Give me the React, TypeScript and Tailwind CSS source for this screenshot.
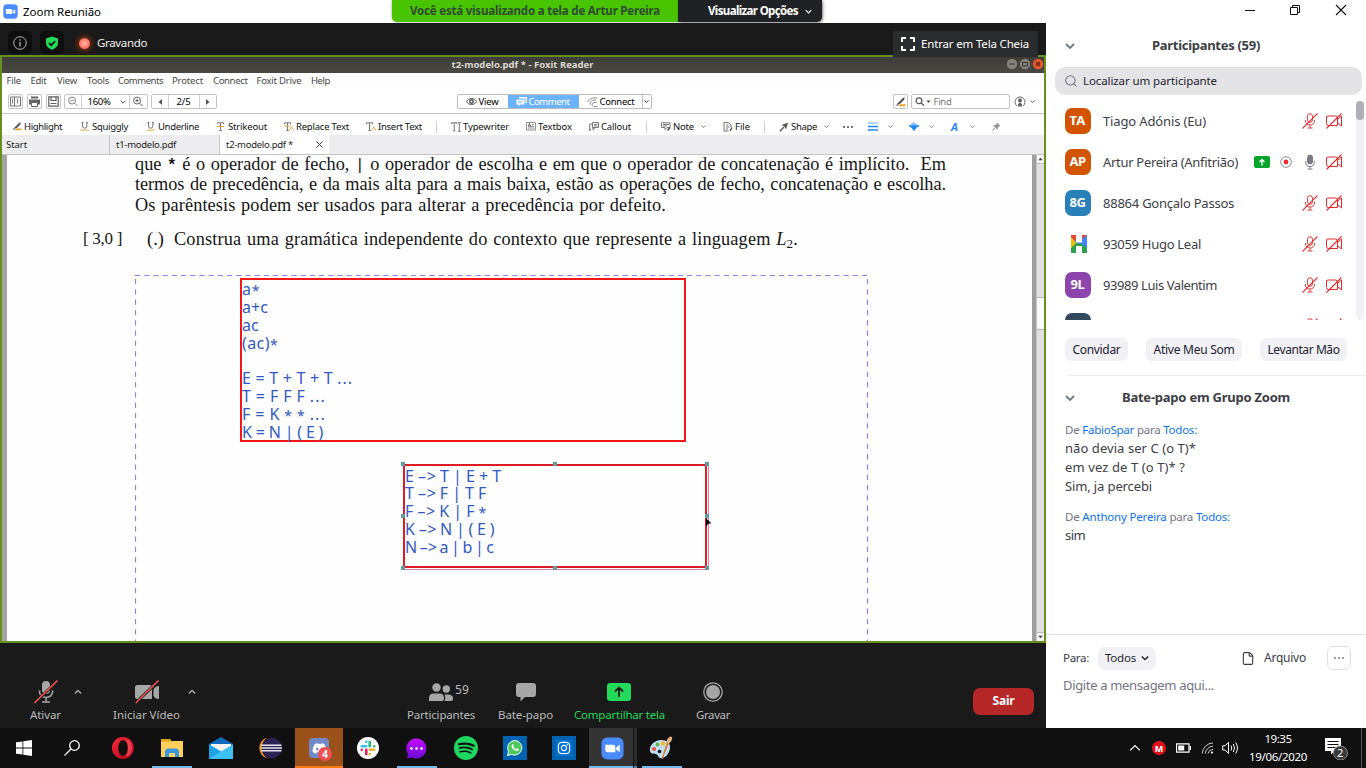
import React, { useLayoutEffect, useRef } from "react";
import { SiSpotify } from "react-icons/si";
import { FaInstagram, FaDiscord } from "react-icons/fa";
import { Search, File } from "lucide-react";

/* One line of text whose letter spacing is worked out so that it fills `w` pixels. */
function Fit({ w, className = "", children }: { w: number; className?: string; children: React.ReactNode }) {
  const ref = useRef<HTMLSpanElement>(null);
  useLayoutEffect(() => {
    const el = ref.current;
    if (!el) return;
    el.style.letterSpacing = "0px";
    const natural = el.getBoundingClientRect().width;
    const count = (el.textContent || "").length || 1;
    el.style.letterSpacing = `${(w - natural) / count}px`;
  }, [w]);
  return (
    <span ref={ref} className={"inline-block shrink-0 whitespace-pre " + className}>
      {children}
    </span>
  );
}

function Chevron({ className = "", up = false, sw = 1.5 }: { className?: string; up?: boolean; sw?: number }) {
  return (
    <svg viewBox="0 0 10 10" className={"shrink-0 " + className} fill="none" stroke="currentColor" strokeWidth={sw}>
      <path d={up ? "M1 7 L5 3 L9 7" : "M1 3 L5 7 L9 3"} />
    </svg>
  );
}

function ZoomLogo({ className = "" }: { className?: string }) {
  return (
    <svg viewBox="0 0 24 24" className={"shrink-0 " + className}>
      <rect x="0.5" y="0.5" width="23" height="23" rx="6" fill="#4a8cff" />
      <path d="M4.5 8h8a2.5 2.5 0 0 1 2.500 2.500V16H7a2.500 2.500 0 0 1-2.500-2.500z" fill="#fff" />
      <path d="M15.800 11l3.700-2.800v7.600L15.800 13z" fill="#fff" />
    </svg>
  );
}

function TitleBar() {
  return (
    <div className="flex h-[23px] shrink-0 items-start bg-white text-black">
      <div className="flex h-[23px] w-[392px] items-center pl-[3px]">
        <ZoomLogo className="h-[15px] w-[15px]" />
        <Fit w={78} className="ml-[5px] text-[11.500px]">Zoom Reunião</Fit>
      </div>
      <div className="flex h-[22px] w-[286px] items-center justify-center rounded-bl-[5px] bg-[#48c400] shadow-[0_0_3px_rgba(0,0,0,0.4)]">
        <Fit w={250} className="text-[11.500px] font-bold text-[#2f4a33]">Você está visualizando a tela de Artur Pereira</Fit>
      </div>
      <div className="flex h-[22px] w-[144px] items-center rounded-br-[5px] bg-[#202124] pl-[30px] text-white shadow-[1px_1px_3px_rgba(0,0,0,0.5)]">
        <Fit w={90} className="text-[11.500px] font-bold">Visualizar Opções</Fit>
        <Chevron className="ml-[7px] h-[7px] w-[7px]" />
      </div>
      <svg className="ml-[422px] h-[22px] w-[104px]" viewBox="0 0 104 22" fill="none" stroke="#111" strokeWidth="1">
        <path d="M1 10.500H11" />
        <path d="M46.500 7.500h7v7h-7zM48.500 7.500V5.500h7v7h-2" />
        <path d="M92 5l10 10M102 5l-10 10" strokeWidth="1.100" />
      </svg>
    </div>
  );
}

function MeetingBar() {
  return (
    <div className="relative z-10 flex h-[32px] shrink-0 bg-[#1a1a1a] pl-[8px] pt-[8px] text-white">
      <div className="flex h-[23px] w-[24px] items-center justify-center rounded-[5px] bg-[#0e0e0e]">
        <svg viewBox="0 0 14 14" className="h-[14px] w-[14px]" fill="none" stroke="#b5b5b5">
          <circle cx="7" cy="7" r="6.300" />
          <path d="M7 6v4.500M7 3.300v1.400" strokeWidth="1.300" />
        </svg>
      </div>
      <div className="ml-[8px] flex h-[23px] w-[24px] items-center justify-center rounded-[5px] bg-[#0e0e0e]">
        <svg viewBox="0 0 14 14" className="h-[14px] w-[14px]">
          <path d="M7 0.500l6 2v4.500c0 3.200-2.600 5.400-6 6.800C3.600 12.400 1 10.200 1 7V2.500z" fill="#23d959" />
          <path d="M4 7l2.200 2.200L10.200 5" stroke="#111" strokeWidth="1.700" fill="none" />
        </svg>
      </div>
      <div className="ml-[10px] flex h-[24px] w-[20px] items-center justify-center">
        <div className="h-[11px] w-[11px] rounded-full bg-radial from-[#ffb3a6] to-[#f2402f] shadow-[0_0_5px_2px_rgba(190,60,10,0.55)]" />
      </div>
      <div className="ml-[3px] flex h-[24px] items-center text-[#eee]">
        <Fit w={50} className="text-[11.500px]">Gravando</Fit>
      </div>
      <div className="ml-auto mr-[8px] flex h-[26px] w-[145px] shrink-0 items-center bg-[#2a2b2d] pl-[8px]">
        <svg viewBox="0 0 14 14" className="h-[14px] w-[14px] shrink-0" fill="none" stroke="#fff" strokeWidth="2">
          <path d="M1 5V1h4M9 1h4v4M13 9v4H9M5 13H1V9" />
        </svg>
        <Fit w={108} className="ml-[6px] text-[11.500px]">Entrar em Tela Cheia</Fit>
      </div>
    </div>
  );
}

const menu: [string, number, string][] = [
  ["File", 14.500, "w-[24px]"],
  ["Edit", 16, "w-[26.500px]"],
  ["View", 20, "w-[30px]"],
  ["Tools", 22, "w-[31px]"],
  ["Comments", 45, "w-[54px]"],
  ["Protect", 31, "w-[41px]"],
  ["Connect", 34.500, "w-[43.500px]"],
  ["Foxit Drive", 45, "w-[54.500px]"],
  ["Help", 19, "w-[30px]"],
];

const boxed = "flex h-[15px] w-[15px] items-center justify-center rounded-[2px] border border-[#c4c4c4] bg-white";

function FoxitToolbar() {
  return (
    <div className="flex h-[24px] shrink-0 items-center border-b border-[#c8c8c8] bg-white pl-[6px] text-[#333]">
      <div className={boxed}>
        <svg viewBox="0 0 11 11" className="h-[11px] w-[11px]" fill="none" stroke="#666">
          <path d="M0.500 1h10v9h-10zM4.500 1v9" strokeWidth=".9" /><path d="M2.500 2.500v5M7.500 2.500v5" stroke="#888" strokeWidth="1.200" />
        </svg>
      </div>
      <div className={boxed + " ml-[4px]"}>
        <svg viewBox="0 0 11 11" className="h-[11px] w-[11px]">
          <path d="M2 0.500h7v2H2zM0 3.500h11v5H9v-2H2v2H0z" fill="#666" />
          <path d="M2.500 6.500h6v4h-6z" fill="none" stroke="#666" />
        </svg>
      </div>
      <div className={boxed + " ml-[3.500px]"}>
        <svg viewBox="0 0 11 11" className="h-[11px] w-[11px]">
          <path d="M0.800 0.800h9.400v9.400H0.800zM3 1v3.500h5V1M2.500 7.500h6" fill="none" stroke="#5c5c5c" strokeWidth="1.200" />
        </svg>
      </div>
      <div className="ml-[3px] flex h-[15px] w-[84px] items-center rounded-[2px] border border-[#c4c4c4]">
        <svg viewBox="0 0 12 12" className="mx-[2px] h-[11px] w-[12px] shrink-0" fill="none" stroke="#777">
          <circle cx="5" cy="5" r="3.800" /><path d="M7.800 7.800L11 11M3.200 5h3.600" />
        </svg>
        <div className="flex h-[13px] w-[49px] shrink-0 items-center border-x border-[#d0d0d0] pl-[6px] pt-px">
          <Fit w={23} className="text-[9.500px] text-black">160%</Fit>
          <Chevron className="ml-[9px] h-[6px] w-[6px]" />
        </div>
        <svg viewBox="0 0 12 12" className="ml-[2px] h-[11px] w-[12px] shrink-0" fill="none" stroke="#555">
          <circle cx="5" cy="5" r="3.800" /><path d="M7.800 7.800L11 11M3.200 5h3.600M5 3.200v3.600" />
        </svg>
      </div>
      <div className="ml-[3px] flex h-[15px] w-[66px] items-center rounded-[2px] border border-[#c4c4c4]">
        <svg viewBox="0 0 16 12" className="h-[12px] w-[16px] shrink-0"><path d="M10 3v6L6.500 6z" fill="#555" /></svg>
        <div className="flex h-[13px] w-[32px] shrink-0 items-center justify-center border-x border-[#d0d0d0] pt-px">
          <Fit w={14} className="text-[9.500px] text-black">2/5</Fit>
        </div>
        <svg viewBox="0 0 16 12" className="h-[12px] w-[16px] shrink-0"><path d="M6 3v6l3.500-3z" fill="#555" /></svg>
      </div>
      <div className="ml-[240px] flex h-[15px] w-[195px] shrink-0 items-center overflow-hidden rounded-[2px] border border-[#bcbcbc] text-[9.500px] text-black">
        <div className="flex w-[50px] shrink-0 items-center pl-[8px]">
          <svg viewBox="0 0 11 9" className="h-[9px] w-[11px]" fill="none" stroke="#555">
            <path d="M0.500 4.500C2.500 0.500 8.500 0.500 10.500 4.500C8.500 8.500 2.500 8.500 0.500 4.500z" /><circle cx="5.500" cy="4.500" r="1.700" strokeWidth="1.500" />
          </svg>
          <Fit w={20} className="ml-[2px] pt-px">View</Fit>
        </div>
        <div className="flex h-[13px] w-[71px] shrink-0 items-center bg-[#6cb3fd] pl-[8px] text-white">
          <svg viewBox="0 0 11 10" className="h-[10px] w-[11px]">
            <path d="M3 0h8v6H9.500V1.500H3z" fill="#fff" /><path d="M0.500 2.500h8v5H4L2.500 9.500V7.500h-2z" fill="#fff" /><path d="M2 4.200h5M2 5.800h4" stroke="#6cb3fd" strokeWidth=".7" />
          </svg>
          <Fit w={41} className="ml-[2px] pt-px">Comment</Fit>
        </div>
        <div className="flex w-[63px] shrink-0 items-center pl-[8px]">
          <svg viewBox="0 0 11 10" className="h-[10px] w-[11px]" fill="none" stroke="#888">
            <path d="M1 5C2.500 1.500 5 0.500 10 1M3 7.500C3 4.500 5 3 9 3M5.500 9.500C4.500 6.500 6 5 9.500 5.500M7 9.500h3" />
          </svg>
          <Fit w={35} className="ml-[2px] pt-px">Connect</Fit>
        </div>
        <div className="flex h-[13px] w-[9px] shrink-0 items-center justify-center border-l border-[#c4c4c4]">
          <Chevron className="h-[5px] w-[5px]" />
        </div>
      </div>
      <div className={boxed + " ml-[241px] shrink-0"}>
        <PenIcon className="h-[10px] w-[11px]" />
      </div>
      <div className="ml-[3px] flex h-[15px] w-[99px] shrink-0 items-center rounded-[2px] border border-[#c4c4c4] pl-[3px]">
        <svg viewBox="0 0 16 9" className="h-[9px] w-[16px]" fill="none" stroke="#555" strokeWidth="1.300">
          <circle cx="4" cy="3.800" r="2.900" /><path d="M6.200 6L9 8.500" /><path d="M11.500 3.500h4l-2 2.500z" fill="#444" stroke="none" />
        </svg>
        <Fit w={18} className="ml-[3px] pt-px text-[9.500px] text-[#777]">Find</Fit>
      </div>
      <svg viewBox="0 0 12 12" className="ml-[4px] h-[12px] w-[12px]" fill="none" stroke="#666">
        <path d="M3 10A5 5 0 1 1 9 10" /><circle cx="6" cy="4.500" r="1.600" fill="#555" /><path d="M4.500 10.500V8L6 7l1.500 1v2.500" fill="#666" />
      </svg>
      <Chevron className="ml-[4px] h-[5px] w-[5px]" />
    </div>
  );
}

function PenIcon({ className = "" }: { className?: string }) {
  return (
    <svg viewBox="0 0 11 10" className={"shrink-0 " + className}>
      <path d="M2 7L8 .8l1.800-.3L9 3 5 7z" fill="#555" />
      <path d="M.5 9l2-2.500L4.500 8z" fill="#777" />
      <path d="M5 7.300h5.500v2H3.500z" fill="#f5a02c" />
    </svg>
  );
}

const g = "#777";
const o = "#e5a53c";
function Glyph({ kind }: { kind: string }) {
  const shapes: Record<string, React.ReactNode> = {
    squiggly: <><path d="M2.500 0.500v3.500a2.200 2.200 0 0 0 4.400 0V0.500M1.500 .6h2M6 .6h2" stroke={g} /><path d="M0 8.500l1.500-1 1.500 1 1.500-1 1.500 1 1.500-1 1.500 1" stroke={o} /></>,
    underline: <><path d="M2.500 0.500v3.500a2.200 2.200 0 0 0 4.400 0V0.500M1.500 .6h2M6 .6h2" stroke={g} /><path d="M1 8.200h7.500" stroke={o} /></>,
    strikeout: <><path d="M1.500 2V0.800h6V2M4.500 .8v7.500M3.200 8.500h2.600" stroke={g} /><path d="M1 4.500h7" stroke={o} /></>,
    replace: <><path d="M.5 2V0.800h6V2M3.500 .8v7.500M2.300 8.500h2.500" stroke={g} /><path d="M0 4h6.500M5 8.500L7.500 5 10 8.500" stroke={o} /></>,
    insert: <><path d="M.5 2V0.800h6V2M3.500 .8v7.500M2.300 8.500h2.500" stroke={g} /><path d="M5.500 8.500L7.800 5 10 8.500" stroke={o} /></>,
    typewriter: <><path d="M.5 2V0.800h5.500V2M3.200 .8v8M2 8.800h2.500M8.300 0v9.500M7 .4h2.700M7 9.300h2.700" stroke={g} /></>,
    textbox: <><path d="M.5 .5h9v7.500h-9zM2 6h6M2 4.500h6M6 2.500h2" stroke={g} strokeWidth=".8" /><path d="M2.500 4l1-2.500 1 2.500" stroke="#555" /></>,
    callout: <><path d="M3.500 .5h6v5h-6zM5 2.500h3.500M5 4h3M3.500 2H.8v6.500M0 7.200l.9 1.600.9-1.600M4 5.500v2.500l2-2.300" stroke={g} /></>,
    note: <><path d="M.5 .8h8.500v4.700H6L4 7.800V5.500H.5zM2 2.500h6M2 4h4" stroke={g} /><path d="M6.500 8.500l2.500-3" stroke="#555" strokeWidth="1.500" /></>,
    file: <><path d="M5.500 9H1V.5h4.500L8 3v2.500M3 3h2.500M3 5h3.500M3 7h2" stroke={g} /><path d="M7 9l2-3.500" stroke="#555" strokeWidth="1.500" /></>,
    shape: <><path d="M.8 9.200L5 5" stroke="#555" strokeWidth="1.300" /><path d="M2.500 3L9 .5 7 7.500 5.500 4.500z" fill="#555" /></>,
  };
  return <svg viewBox="0 0 10 10" className="h-[10px] w-[10px] shrink-0" fill="none">{shapes[kind]}</svg>;
}

function Tool({ kind, label, w, cell, chevron = false }: { kind: string; label: string; w: number; cell: string; chevron?: boolean }) {
  return (
    <div className={"flex shrink-0 items-center " + cell}>
      {kind === "highlight" ? <PenIcon className="h-[9px] w-[10px]" /> : <Glyph kind={kind} />}
      <Fit w={w} className="ml-[2px] pt-px">{label}</Fit>
      {chevron && <Chevron className="ml-[7px] h-[5px] w-[5px] text-[#666]" />}
    </div>
  );
}

const Sep = () => <div className="mr-[14px] h-[12px] w-px shrink-0 bg-[#cfcfcf]" />;

function CommentTools() {
  return (
    <div className="flex h-[21px] shrink-0 items-center bg-white pl-[10px] pt-[4px] text-[9.500px] text-[#111]">
      <Tool kind="highlight" label="Highlight" w={38} cell="w-[68px]" />
      <Tool kind="squiggly" label="Squiggly" w={36} cell="w-[66px]" />
      <Tool kind="underline" label="Underline" w={41} cell="w-[70px]" />
      <Tool kind="strikeout" label="Strikeout" w={39} cell="w-[68px]" />
      <Tool kind="replace" label="Replace Text" w={53} cell="w-[82px]" />
      <Tool kind="insert" label="Insert Text" w={44} cell="w-[70px]" />
      <Sep />
      <Tool kind="typewriter" label="Typewriter" w={46} cell="w-[75px]" />
      <Tool kind="textbox" label="Textbox" w={34} cell="w-[63px]" />
      <Tool kind="callout" label="Callout" w={30} cell="w-[57px]" />
      <Sep />
      <Tool kind="note" label="Note" w={21} cell="w-[62px]" chevron />
      <Tool kind="file" label="File" w={15} cell="w-[41px]" />
      <Sep />
      <Tool kind="shape" label="Shape" w={26} cell="w-[64px]" chevron />
      <div className="flex w-[25px] shrink-0 gap-[2px]">
        <i className="size-[2px] bg-[#777]" /><i className="size-[2px] bg-[#777]" /><i className="size-[2px] bg-[#777]" />
      </div>
      <div className="flex w-[41px] shrink-0 items-center text-[#666]">
        <svg viewBox="0 0 10 9" className="h-[9px] w-[10px]"><path d="M0 1h10" stroke="#9acbff" strokeWidth="1.500" /><path d="M0 4.500h10M0 8h10" stroke="#1e88ff" strokeWidth="1.600" /></svg>
        <Chevron className="ml-[10px] h-[5px] w-[5px]" />
      </div>
      <div className="flex w-[42px] shrink-0 items-center text-[#666]">
        <svg viewBox="0 0 10 9" className="h-[9px] w-[10px]"><path d="M4.500 0L0.500 3.500h9z" fill="#8cc4ff" /><path d="M0 3.300h10v1.500H8.500L5 9 1.500 4.800H0z" fill="#1e88ff" /></svg>
        <Chevron className="ml-[10px] h-[5px] w-[5px]" />
      </div>
      <div className="flex w-[41px] shrink-0 items-center text-[#666]">
        <span className="w-[10px] text-[11px] leading-[10px] font-bold text-[#1e88ff] italic">A</span>
        <Chevron className="ml-[9px] h-[5px] w-[5px]" />
      </div>
      <svg viewBox="0 0 9 9" className="h-[9px] w-[9px]"><path d="M5 .5L8.500 4l-1 .3L6 5.700 5.500 8 1 3.500l2.300-.5L4.700 1.500z" fill="#999" /><path d="M.5 8.500l3-3" stroke="#999" /></svg>
    </div>
  );
}

function Tabs() {
  return (
    <div className="flex h-[20px] shrink-0 border-b border-[#c4c4c6] bg-[#ededef] text-[9.500px] text-[#222]">
      <div className="flex w-[108px] items-center border-r border-[#c4c4c6] pl-[4px] pt-[2px]"><Fit w={21}>Start</Fit></div>
      <div className="flex w-[110px] items-center border-r border-[#c4c4c6] pl-[6px] pt-[2px]"><Fit w={60}>t1-modelo.pdf</Fit></div>
      <div className="flex w-[109px] items-center bg-white pl-[6px] pt-[2px]">
        <Fit w={67}>t2-modelo.pdf *</Fit>
        <svg viewBox="0 0 8 8" className="mb-[2px] ml-[23px] h-[7px] w-[7px]" stroke="#333" strokeWidth="1.100"><path d="M.5 .5l7 7M7.500 .5l-7 7" /></svg>
      </div>
    </div>
  );
}

const Star = () => <span className="relative top-[1px] text-[14px]">*</span>;

const boxA: [React.ReactNode, number][] = [
  [<>a<Star /></>, 18],
  ["a+c", 26],
  ["ac", 16.500],
  [<>(ac)<Star /></>, 36],
  [" ", 5],
  ["E = T + T + T ...", 111],
  ["T = F F F ...", 84],
  [<>F = K <Star /> <Star /> ...</>, 84],
  ["K = N | ( E )", 82],
];
const boxB: [React.ReactNode, number][] = [
  ["E –> T | E + T", 97],
  ["T –> F | T F", 82],
  [<>F –&gt; K | F <Star /></>, 82],
  ["K –> N | ( E )", 90],
  ["N –> a | b | c", 89],
];

const notes = "font-['Noto_Sans',sans-serif] text-[16px] leading-[17.900px] text-[#3159c4] [word-spacing:-1.500px]";

function DocumentPage() {
  return (
    <div className="flex min-h-0 flex-1">
      <div className="w-[5px] shrink-0 bg-[#a3a3a3]" />
      <div className="relative flex w-[1025px] shrink-0 flex-col overflow-hidden bg-[#fefefe] font-['Liberation_Serif',serif] text-[18.300px] leading-[20.500px] text-[#151515]">
        <div className="ml-[128px] mt-[-1.500px] flex flex-col items-start">
          <Fit w={811} className="h-[20.500px] [word-spacing:1px]">que <b className="font-['Liberation_Mono',monospace] text-[16px] leading-[16px]">*</b> é o operador de fecho, <span className="font-['Liberation_Mono',monospace] text-[16px] leading-[16px]">|</span> o operador de escolha e em que o operador de concatenação é implícito.  Em</Fit>
          <Fit w={811} className="h-[20.500px] [word-spacing:1px]">termos de precedência, e da mais alta para a mais baixa, estão as operações de fecho, concatenação e escolha.</Fit>
          <Fit w={531} className="h-[20.500px] [word-spacing:1px]">Os parêntesis podem ser usados para alterar a precedência por defeito.</Fit>
        </div>
        <div className="ml-[76px] mt-[14px] flex">
          <Fit w={39} className="text-[17px]">[ 3,0 ]</Fit>
          <Fit w={17} className="ml-[25px]">(.)</Fit>
          <Fit w={624} className="ml-[10px] h-[20.500px] [word-spacing:1px]">Construa uma gramática independente do contexto que represente a linguagem <i>L</i><span className="relative top-[3px] text-[13px] leading-[13px]">2</span>.</Fit>
        </div>
        <svg viewBox="0 0 734 367" className="absolute left-[128px] top-[120px] h-[367px] w-[734px]" fill="none" stroke="#8b82f0" strokeWidth="1.200">
          <path d="M0 .5H733" strokeDasharray="5.200 4" />
          <path d="M.5 4V367M732.500 4V367" strokeDasharray="5.300 5" />
        </svg>

        <div className={"absolute left-[233px] top-[123px] flex h-[164px] w-[446px] flex-col border-2 border-[#f01818] pt-px " + notes}>
          {boxA.map(([t, w], i) => (
            <div key={i} className="h-[17.900px] shrink-0"><Fit w={w}>{t}</Fit></div>
          ))}
        </div>
        <div className={"absolute left-[396px] top-[309px] flex h-[104px] w-[304px] flex-col border-2 border-[#dc1c24] pt-[1.500px] shadow-[1px_1px_0_0_#fff,2px_2px_0_0_#d77fae] " + notes}>
          {boxB.map(([t, w], i) => (
            <div key={i} className="h-[17.900px] shrink-0"><Fit w={w}>{t}</Fit></div>
          ))}
        </div>
        <div className="absolute left-[394px] top-[307px] grid h-[108px] w-[308px] grid-cols-3 content-between">
          <i className="size-[4px] bg-[#5f9ea0]" /><i className="size-[4px] justify-self-center bg-[#5f9ea0]" /><i className="size-[4px] justify-self-end bg-[#5f9ea0]" />
          <i className="size-[4px] bg-[#5f9ea0]" /><i /><i className="size-[4px] justify-self-end bg-[#5f9ea0]" />
          <i className="size-[4px] bg-[#5f9ea0]" /><i className="size-[4px] justify-self-center bg-[#5f9ea0]" /><i className="size-[4px] justify-self-end bg-[#5f9ea0]" />
        </div>
        <svg viewBox="0 0 7 10" className="absolute left-[698px] top-[363px] h-[10px] w-[7px]"><path d="M1 0l5.500 5.500H3.500L1 8.500z" fill="#000" /></svg>
      </div>
      <div className="w-[4px] shrink-0 bg-[#9e9e9e]" />
      <div className="flex w-[8px] shrink-0 flex-col border-l border-[#c5c5c5] bg-[#e2e0de]">
        <svg viewBox="0 0 7 9" className="h-[9px] w-[7px] border-b border-[#bbb] bg-[#f4f4f4]"><path d="M1 6l2.500-3L6 6z" fill="#444" /></svg>
        <div className="mt-[133px] h-[33px] border-y border-[#b5b5b5] bg-[#fafafa]" />
        <svg viewBox="0 0 7 9" className="mt-auto h-[9px] w-[7px] border-t border-[#bbb] bg-[#f4f4f4]"><path d="M1 3l2.500 3L6 3z" fill="#444" /></svg>
      </div>
    </div>
  );
}

function SharedScreen() {
  return (
    <div className="flex h-[588px] shrink-0 flex-col border-2 border-[#678f1d] bg-white">
      <div className="flex h-[16px] shrink-0 items-center bg-linear-to-b from-[#3f3d39] to-[#4a4843]">
        <Fit w={142} className="ml-[449.500px] text-[9.500px] font-bold text-[#dbd8d0]">t2-modelo.pdf * - Foxit Reader</Fit>
        <svg viewBox="0 0 38 12" className="mb-[2px] ml-auto h-[12px] w-[38px]">
          <circle cx="6" cy="6" r="5.200" fill="#86827b" /><path d="M3.500 6h5" stroke="#333" />
          <circle cx="19" cy="6" r="5.200" fill="#86827b" /><path d="M16.500 4.500h5v3.500h-5z" stroke="#333" fill="none" />
          <circle cx="32" cy="6" r="5.200" fill="#e65a2b" /><path d="M30 4l4 4M34 4l-4 4" stroke="#5a2010" strokeWidth="1.200" />
        </svg>
      </div>
      <div className="flex h-[17px] shrink-0 items-center bg-[#fdfdfd] pl-[4.500px] text-[9.500px] text-[#4a4a4a]">
        {menu.map(([t, w, cell]) => (
          <div key={t} className={"shrink-0 " + cell}><Fit w={w}>{t}</Fit></div>
        ))}
      </div>
      <FoxitToolbar />
      <CommentTools />
      <Tabs />
      <DocumentPage />
    </div>
  );
}

function BarItem({ label, w, className = "", green = false, children }: { label: string; w: number; className?: string; green?: boolean; children: React.ReactNode }) {
  return (
    <div className={"flex shrink-0 flex-col items-center " + className}>
      <div className="relative flex h-[24px] w-[30px] items-center justify-center">{children}</div>
      <div className={"flex h-[22px] items-center " + (green ? "text-[#23d959]" : "text-[#bababa]")}>
        <Fit w={w} className="text-[11.500px]">{label}</Fit>
      </div>
    </div>
  );
}

function MeetingControls() {
  return (
    <div className="flex h-[85px] shrink-0 bg-[#1a1a1a] pl-[30px] pt-[37px]">
      <BarItem label="Ativar" w={31} className="w-[31px]">
        <svg viewBox="0 0 24 24" className="h-[24px] w-[24px]" fill="none">
          <rect x="8" y="1" width="8" height="13" rx="4" fill="#a6a6a6" />
          <path d="M5.500 10.500v1.500a6.500 5.500 0 0 0 13 0v-1.500M12 17.500v4.500M8 22h8" stroke="#a6a6a6" strokeWidth="1.600" />
          <path d="M.5 23L23.500 1" stroke="#1a1a1a" strokeWidth="3" /><path d="M.5 23L23.500 .5" stroke="#e85050" strokeWidth="1.600" />
        </svg>
      </BarItem>
      <Chevron up className="ml-[13px] mt-[8px] h-[8px] w-[8px] text-[#aaa]" sw={1.8} />
      <BarItem label="Iniciar Vídeo" w={67} className="ml-[31px] w-[67px]">
        <svg viewBox="0 0 24 24" className="h-[24px] w-[24px]">
          <path d="M2.500 5H15a2 2 0 0 1 2 2v12H2.500A2.500 2.500 0 0 1 0 16.500v-9A2.500 2.500 0 0 1 2.500 5zM18.500 9.500Q20 6 24 6v13q-4 0-5.500-3z" fill="#a6a6a6" />
          <path d="M.5 23L23.500 1" stroke="#1a1a1a" strokeWidth="3" /><path d="M.8 23L23.500 .5" stroke="#e85050" strokeWidth="1.600" />
        </svg>
      </BarItem>
      <Chevron up className="ml-[8px] mt-[8px] h-[8px] w-[8px] text-[#aaa]" sw={1.8} />
      <BarItem label="Participantes" w={68} className="ml-[211px] w-[68px]">
        <svg viewBox="0 0 24 20" className="h-[20px] w-[24px]" fill="#a6a6a6">
          <circle cx="7.500" cy="5.500" r="4.200" /><path d="M0 19v-3.500Q.5 11.500 4.500 11.500h6Q14.500 11.500 15 15.500V17q0 2-2 2z" />
          <circle cx="17.300" cy="7" r="3.700" /><path d="M15.500 12.500h4.500q4 .5 4 4v.5q0 2-2 2h-6.500q1-1.500.7-3.500 0-1.500-.7-3z" />
        </svg>
        <span className="absolute left-[29px] top-[2px] flex h-[16px] items-center"><Fit w={14} className="text-[12px] leading-[16px] text-[#bababa]">59</Fit></span>
      </BarItem>
      <BarItem label="Bate-papo" w={55} className="ml-[23px] w-[55px]">
        <svg viewBox="0 0 20 18" className="h-[18px] w-[20px]"><path d="M3 0h14a3 3 0 0 1 3 3v8a3 3 0 0 1-3 3H9l-4.500 4.500V14H3a3 3 0 0 1-3-3V3a3 3 0 0 1 3-3z" fill="#a6a6a6" /></svg>
      </BarItem>
      <BarItem label="Compartilhar tela" w={91} green className="ml-[21px] w-[91px]">
        <svg viewBox="0 0 24 18" className="mr-px h-[18px] w-[24px]"><rect width="24" height="18" rx="3" fill="#23d959" /><path d="M12 14V5M8 8.500L12 4.500l4 4" stroke="#1a1a1a" strokeWidth="1.800" fill="none" /></svg>
      </BarItem>
      <BarItem label="Gravar" w={34} className="ml-[31px] w-[34px]">
        <svg viewBox="0 0 20 20" className="h-[20px] w-[20px]"><circle cx="10" cy="10" r="9.200" fill="none" stroke="#a6a6a6" strokeWidth="1.300" /><circle cx="10" cy="10" r="7" fill="#a6a6a6" /></svg>
      </BarItem>
      <div className="ml-[243px] mt-[8px] flex h-[27px] w-[61px] shrink-0 items-center justify-center rounded-[7px] bg-[#b62727] pb-px text-white">
        <Fit w={22} className="text-[12px] font-bold">Sair</Fit>
      </div>
    </div>
  );
}

function MutedMic() {
  return (
    <svg viewBox="0 0 16 16" className="h-[16px] w-[16px] shrink-0" fill="none" stroke="#dd3a3a">
      <rect x="5.500" y=".7" width="5" height="8.600" rx="2.500" /><path d="M3.500 7v1a4.500 4 0 0 0 9 0V7M8 12v2.800M5.500 15h5" />
      <path d="M.5 15.500L15.500 .5" strokeWidth="1.100" />
    </svg>
  );
}
function OffCamera() {
  return (
    <svg viewBox="0 0 16 16" className="ml-[8px] h-[16px] w-[16px] shrink-0" fill="none" stroke="#dd2a2a">
      <path d="M2 3h7.500a2 2 0 0 1 2 2v7.500H2.500a2 2 0 0 1-2-2V3.500zM11.500 6.500l4-3.500v10l-4-3.500" />
      <path d="M.5 15.500L15.500 .5" strokeWidth="1.100" />
    </svg>
  );
}

function Avatar({ text, color }: { text: string; color: string }) {
  return (
    <div className={"flex size-[26px] shrink-0 items-center justify-center rounded-[7px] text-[13px] font-bold text-white " + color}>
      <Fit w={text === "9L" ? 14 : 16}>{text}</Fit>
    </div>
  );
}

const people: { id: string; color: string; name: string; w: number; host?: boolean }[] = [
  { id: "TA", color: "bg-[#d35400]", name: "Tiago Adónis (Eu)", w: 103 },
  { id: "AP", color: "bg-[#d35400]", name: "Artur Pereira (Anfitrião)", w: 135, host: true },
  { id: "8G", color: "bg-[#2980b9]", name: "88864 Gonçalo Passos", w: 131 },
  { id: "H", color: "", name: "93059 Hugo Leal", w: 98 },
  { id: "9L", color: "bg-[#8e44ad]", name: "93989 Luis Valentim", w: 114 },
  { id: "", color: "bg-[#34495e]", name: "", w: 0 },
];

function Participants() {
  return (
    <div className="shrink-0">
      <div className="flex h-[44px] items-center pl-[19px] pt-[2px] text-[#3d3d46]">
        <Chevron className="h-[10px] w-[10px] text-[#6e7680]" sw={1.8} />
        <Fit w={108} className="ml-[77px] text-[13px] font-bold">Participantes (59)</Fit>
      </div>
      <div className="ml-[9px] flex h-[28px] w-[307px] items-center rounded-[10px] bg-[#e4e4e7] pl-[9px] text-[#222230]">
        <Search className="h-[14px] w-[14px] text-[#6e7680]" strokeWidth={1.8} />
        <Fit w={134} className="ml-[5px] text-[11.500px]">Localizar um participante</Fit>
      </div>
      <div className="mt-[5px] flex h-[220px] overflow-hidden">
        <div className="flex w-[310px] shrink-0 flex-col">
          {people.map((p) => (
            <div key={p.id} className="flex h-[41px] shrink-0 items-center pl-[18.500px] pr-[14px] text-[#3d3d46]">
              {p.id === "H" ? (
                <svg viewBox="0 0 26 26" className="size-[26px] shrink-0">
                  <path d="M6 22V4h5v7.500h6V4h5v18h-5v-7h-6v7z" fill="#4285f4" />
                  <path d="M6 4h5v6L6 7z" fill="#ea4335" />
                  <path d="M6 6l5 5.500v1L6 18z" fill="#fbbc05" />
                  <path d="M6 17l5-5 5.500 1 5.500 4v5h-5v-7h-6v7H6z" fill="#2ba24c" />
                  <path d="M17 4h5l-5 4z" fill="#ea4335" />
                </svg>
              ) : (
                <Avatar text={p.id} color={p.color} />
              )}
              <Fit w={p.w} className="ml-[12.500px] pt-[2px] text-[13px]">{p.name}</Fit>
              <div className="ml-auto flex items-center">
                {p.host ? (
                  <>
                    <svg viewBox="0 0 16 12" className="h-[12px] w-[16px]"><rect width="16" height="12" rx="2" fill="#06a42c" /><path d="M8 9.500V4M5.500 6L8 3.500 10.500 6" stroke="#fff" strokeWidth="1.300" fill="none" /></svg>
                    <svg viewBox="0 0 12 12" className="ml-[10px] h-[12px] w-[12px]"><circle cx="6" cy="6" r="5.300" fill="none" stroke="#8a8a92" /><circle cx="6" cy="6" r="2.400" fill="#f02e2e" /></svg>
                    <svg viewBox="0 0 16 16" className="ml-[10px] h-[16px] w-[16px]" fill="none" stroke="#7b7b86"><rect x="5.500" y="1" width="5" height="9" rx="2.500" fill="#7b7b86" /><path d="M3.800 7v1.500a4.200 4 0 0 0 8.400 0V7M8 12.500v2.300M5.500 15h5" /></svg>
                  </>
                ) : (
                  <MutedMic />
                )}
                <OffCamera />
              </div>
            </div>
          ))}
        </div>
        <div className="mt-px w-[8px] rounded-full bg-[#f1f1f6]">
          <div className="h-[19px] rounded-full bg-[#b0b0b8]" />
        </div>
      </div>
      <div className="flex h-[55px] items-start pl-[19px] pt-[18px] text-[12px] text-[#222230]">
        <div className="flex h-[23px] w-[63px] items-center justify-center rounded-[6px] bg-[#f1f1f6]"><Fit w={48}>Convidar</Fit></div>
        <div className="ml-[18px] flex h-[23px] w-[96px] items-center justify-center rounded-[6px] bg-[#f1f1f6]"><Fit w={81}>Ative Meu Som</Fit></div>
        <div className="ml-[18px] flex h-[23px] w-[87px] items-center justify-center rounded-[6px] bg-[#f1f1f6]"><Fit w={72}>Levantar Mão</Fit></div>
      </div>
    </div>
  );
}

function Chat() {
  return (
    <div className="flex min-h-0 flex-1 flex-col">
      <div className="ml-[21px] h-px bg-[#ededf1]" />
      <div className="flex h-[44px] items-center pl-[19px] text-[#3d3d46]">
        <Chevron className="h-[10px] w-[10px] text-[#6e7680]" sw={1.8} />
        <Fit w={168} className="ml-[47px] text-[13px] font-bold">Bate-papo em Grupo Zoom</Fit>
      </div>
      <div className="flex flex-col pl-[19px] text-[13px] leading-[19px] text-[#3d3d46]">
        <div className="h-[19px]"><Fit w={132} className="text-[11.500px] text-[#747487]">De <span className="text-[#0e71eb]">FabioSpar</span> para <span className="text-[#0e71eb]">Todos:</span></Fit></div>
        <div className="h-[19px]"><Fit w={131}>não devia ser C (o T)*</Fit></div>
        <div className="h-[19px]"><Fit w={120}>em vez de T (o T)* ?</Fit></div>
        <div className="h-[19px]"><Fit w={87}>Sim, ja percebi</Fit></div>
        <div className="mt-[11px] h-[19px]"><Fit w={165} className="text-[11.500px] text-[#747487]">De <span className="text-[#0e71eb]">Anthony Pereira</span> para <span className="text-[#0e71eb]">Todos:</span></Fit></div>
        <div className="h-[19px]"><Fit w={20}>sim</Fit></div>
      </div>
      <div className="mt-auto h-[94px] border-t border-[#e4e4ed] pl-[17px] text-[12px] text-[#3d3d46]">
        <div className="mt-[11px] flex h-[24px] items-center">
          <Fit w={26} className="text-[11.500px]">Para:</Fit>
          <div className="ml-[9px] flex h-[23px] w-[58px] items-center rounded-[7px] bg-[#f1f1f6] pl-[7px] text-[11.500px] text-[#222230]">
            <Fit w={31}>Todos</Fit>
            <Chevron className="ml-[5px] h-[8px] w-[8px]" sw={1.8} />
          </div>
          <File className="ml-[85px] h-[15px] w-[14px]" strokeWidth={1.900} />
          <Fit w={42} className="ml-[9px]">Arquivo</Fit>
          <div className="ml-[21px] flex size-[24px] items-center justify-center gap-[2px] rounded-[6px] border border-[#e0e0e8]">
            <i className="size-[2px] bg-[#a0a0aa]" /><i className="size-[2px] bg-[#a0a0aa]" /><i className="size-[2px] bg-[#a0a0aa]" />
          </div>
        </div>
        <div className="mt-[5px] h-[20px] text-[13px] leading-[20px] text-[#747487]"><Fit w={151}>Digite a mensagem aqui...</Fit></div>
      </div>
    </div>
  );
}

function Task({ children, line = false, className = "w-[49px]" }: { children: React.ReactNode; line?: boolean; className?: string }) {
  return (
    <div className={"flex h-[40px] shrink-0 flex-col items-center " + className}>
      <div className="flex h-[38px] items-center justify-center pt-[2px]">{children}</div>
      {line && <div className="h-[2px] w-[40px] bg-[#76b9ed]" />}
    </div>
  );
}

function Taskbar() {
  return (
    <div className="flex h-[40px] shrink-0 bg-[#101010] text-white">
      <Task className="w-[48px]">
        <svg viewBox="0 0 16 16" className="size-[16px]" fill="#fff"><path d="M0 2.300l6.500-.9v6.200H0zM7.300 1.300L16 0v7.600H7.300zM0 8.400h6.500v6.200L0 13.700zM7.300 8.400H16V16l-8.700-1.200z" /></svg>
      </Task>
      <Task className="w-[50px]">
        <svg viewBox="0 0 16 16" className="mr-[2px] size-[16px]" fill="none" stroke="#fff" strokeWidth="1.300"><circle cx="10.500" cy="5.500" r="4.800" /><path d="M7 9L.5 15.500" /></svg>
      </Task>
      <Task>
        <svg viewBox="0 0 22 22" className="size-[22px]">
          <defs><linearGradient id="op" x1="0" y1="0" x2="1" y2="1"><stop offset="0" stopColor="#ff2b3c" /><stop offset="1" stopColor="#a70014" /></linearGradient></defs>
          <path fillRule="evenodd" d="M11 0a11 11 0 1 0 0 22a11 11 0 0 0 0-22zM11 3.200c2.800 0 4.600 3.400 4.600 7.800s-1.800 7.800-4.600 7.800-4.600-3.400-4.600-7.800S8.200 3.200 11 3.200z" fill="url(#op)" />
          <path d="M13 3.300c2.500 1 3 4.500 3 7.700s-.5 6.700-3 7.700c1.200.6 2.500.5 4-.2A10.500 10.500 0 0 0 17 3.500c-1.500-.7-2.800-.8-4-.2z" fill="#ff5a66" opacity=".65" />
        </svg>
      </Task>
      <Task line>
        <svg viewBox="0 0 22 18" className="h-[18px] w-[22px]"><path d="M0 0h9l1.500 2H22v16H0z" fill="#ffd15c" /><path d="M0 0h9l1.500 2.500H0z" fill="#e3a21a" /><path d="M4 18v-6.500L6 9.500h10l2 2V18h-4v-4H8v4z" fill="#3a96dd" /></svg>
      </Task>
      <Task>
        <svg viewBox="0 0 24 22" className="h-[22px] w-[24px]"><path d="M0 7L12 0l12 7v15H0z" fill="#0f6cbd" /><path d="M2 7h20v8H2z" fill="#f4f4f4" /><path d="M0 7.500l12 7 12-7V22H0z" fill="#38bdf2" /><path d="M12 14.500L0 22V7.500z" fill="#1fa3e6" /><path d="M24 7.500V22H0z" fill="#41c3f7" opacity=".5" /></svg>
      </Task>
      <Task>
        <svg viewBox="0 0 24 22" className="h-[22px] w-[24px]"><path d="M9 .5A11 11 0 0 0 9 21.500A13.500 13.500 0 0 1 9 .5z" fill="#f7941e" /><circle cx="13.500" cy="11" r="10.300" fill="#2c2255" /><path d="M3.200 8.300H23.500M3 11H24M3.200 13.700H23.500" stroke="#e8e6f0" strokeWidth="1.500" /></svg>
      </Task>
      <div className="ml-px flex h-[40px] w-[48px] shrink-0 flex-col border-b-2 border-[#ff7a10] bg-[#9a521a] pl-[14px] pt-[10px]">
        <div className="relative flex size-[20px] items-center justify-center rounded-[4px] bg-[#7289c8]">
          <FaDiscord className="size-[15px] text-white" />
          <div className="absolute left-[9px] top-[9px] flex size-[14px] items-center justify-center rounded-full bg-[#f05050] text-[10px] leading-[10px] font-bold text-white">4</div>
        </div>
      </div>
      <Task>
        <div className="flex size-[22px] items-center justify-center rounded-full bg-white">
          <svg viewBox="0 0 14 14" className="size-[16px]" fill="none" strokeWidth="2.300" strokeLinecap="round">
            <path d="M5.500 1.500v.1M1.500 5.500h4" stroke="#36c5f0" /><path d="M8.500 1.500v4M12.500 5.500h-.1" stroke="#2eb67d" />
            <path d="M8.500 8.500h4M8.500 12.500v-.1" stroke="#ecb22e" /><path d="M5.500 8.500v4M1.500 8.500h.1" stroke="#e01e5a" />
          </svg>
        </div>
      </Task>
      <Task line>
        <svg viewBox="0 0 21 21" className="size-[21px]"><defs><linearGradient id="ms" x1="0" y1="0" x2="0" y2="1"><stop offset="0" stopColor="#c80bff" /><stop offset="1" stopColor="#6a0bd8" /></linearGradient></defs><path d="M10.500 .5a10 10 0 1 1-4.500 19L1 20.500l1-4.500A10 10 0 0 1 10.500 .5z" fill="url(#ms)" /><g fill="#fff"><circle cx="5.500" cy="10.500" r="1.300" /><circle cx="10.500" cy="10.500" r="1.300" /><circle cx="15.500" cy="10.500" r="1.300" /></g></svg>
      </Task>
      <Task><SiSpotify className="size-[24px] text-[#1ed760]" /></Task>
      <Task>
        <div className="flex size-[24px] items-center justify-center bg-[#0063b1]">
          <svg viewBox="0 0 16 16" className="size-[16px]"><path d="M8 .5a7.300 7.300 0 1 1-3.500 13.900L.5 15.500l1.100-4A7.300 7.300 0 0 1 8 .5z" fill="#4dc95c" stroke="#fff" /><path d="M5.500 4.200c.6-.5 1 0 1.400 1.400.1.500-.5.800-.4 1.100.5 1.100 1.400 1.900 2.600 2.400.4 0 .7-.8 1.100-.8 1.500.6 1.800.9 1.500 1.600-.6 1.200-2 1.200-3.200.7C6.200 9.500 4.800 8 4.500 6.300c0-.9.300-1.600 1-2.100z" fill="#fff" /></svg>
        </div>
      </Task>
      <Task><div className="flex size-[24px] items-center justify-center bg-[#0063b1]"><div className="flex size-[16px] items-center justify-center bg-[#0873d0]"><FaInstagram className="size-[14px] text-white" /></div></div></Task>
      <div className="ml-px flex h-[40px] w-[44px] shrink-0 items-center justify-center border-b-2 border-[#76b9ed] bg-[#343434] pt-[2px] pl-[3px]">
        <ZoomLogo className="size-[23px]" />
      </div>
      <div className="ml-px h-[40px] w-[3px] shrink-0 border-b-2 border-[#4f86b5] bg-[#2c2c2c]" />
      <Task line>
        <svg viewBox="0 0 24 24" className="mr-[2px] h-[24px] w-[24px]">
          <path d="M1 15C0 9 6 4 12 4c6 0 9.500 3 9 8s-4 10-9 10c-3 0-2.500-2.500-4-3.500S2 19 1 15z" fill="#bfe0f2" /><circle cx="5" cy="13" r="2" fill="#e34b3c" /><circle cx="8.500" cy="8.500" r="2" fill="#5eb946" /><circle cx="14" cy="7.500" r="2.200" fill="#f5b921" /><circle cx="10.500" cy="15.500" r="1.800" fill="#101010" />
          <path d="M13 23l5-16 1.500 .5z" fill="#d9843a" stroke="#d9843a" /><path d="M17.500 7c0-3 1.500-6 4.500-6.500 2 1.500 1.500 4-2 7z" fill="#e2b07a" />
        </svg>
      </Task>
      <div className="ml-auto flex h-[40px] w-[237px] shrink-0 items-center">
        <Chevron up className="h-[12px] w-[12px]" sw={1} />
        <div className="ml-[11px] flex size-[14px] items-center justify-center rounded-full bg-[#e0101a] text-[9px] leading-[9px] font-bold">M</div>
        <svg viewBox="0 0 15 10" className="ml-[10px] h-[10px] w-[15px]"><path d="M.5 .8h12.500v8.400H.5z" fill="none" stroke="#fff" strokeWidth="1.200" /><path d="M2.200 2.500h6v5h-6zM13.500 3h1.500v4h-1.500z" fill="#fff" /></svg>
        <svg viewBox="0 0 13 13" className="ml-[10px] h-[12px] w-[13px]" fill="none" stroke="#ddd"><path d="M.8 12.500A12 12 0 0 1 12.500 1M4 12.500A9 9 0 0 1 12.500 4.500M7 12.500A6 6 0 0 1 12.500 8" /><circle cx="11.300" cy="11.500" r="1.200" fill="#fff" stroke="none" /></svg>
        <svg viewBox="0 0 17 14" className="ml-[8px] h-[14px] w-[17px]" fill="none" stroke="#fff"><path d="M.7 4.800H3l3.500-3.500v11L3 9H.7zM9 4.500q1.500 2.500 0 5M11.300 3q2.500 4 0 8M13.700 1.500q3.500 5.500 0 11" /></svg>
        <div className="ml-[9px] flex w-[60px] flex-col items-center pb-px text-[11.500px] leading-[18px]">
          <Fit w={27}>19:35</Fit>
          <Fit w={58}>19/06/2020</Fit>
        </div>
        <div className="relative ml-[16px] h-[24px] w-[26px]">
          <svg viewBox="0 0 26 24" className="h-[24px] w-[26px]"><path d="M1 2h16v13H10.500l-3.500 3.500V15H1z" fill="#fff" /><path d="M3.500 5.500h11M3.500 8.500h11M3.500 11.500h8" stroke="#101010" /><circle cx="16.500" cy="17" r="7" fill="#3a3a3a" stroke="#8a8a8a" /></svg>
          <span className="absolute left-[13px] top-[11px] text-[11px] leading-[12px]">2</span>
        </div>
        <div className="ml-auto mr-[4px] h-[40px] w-px bg-[#555]" />
      </div>
    </div>
  );
}

export default function App() {
  return (
    <div className="flex h-[768px] w-[1366px] flex-col overflow-hidden bg-white font-['Noto_Sans','Open_Sans',sans-serif]">
      <TitleBar />
      <div className="flex h-[705px] shrink-0">
        <div className="flex w-[1046px] shrink-0 flex-col">
          <MeetingBar />
          <SharedScreen />
          <MeetingControls />
        </div>
        <div className="flex w-[320px] shrink-0 flex-col bg-white">
          <Participants />
          <Chat />
        </div>
      </div>
      <Taskbar />
    </div>
  );
}
